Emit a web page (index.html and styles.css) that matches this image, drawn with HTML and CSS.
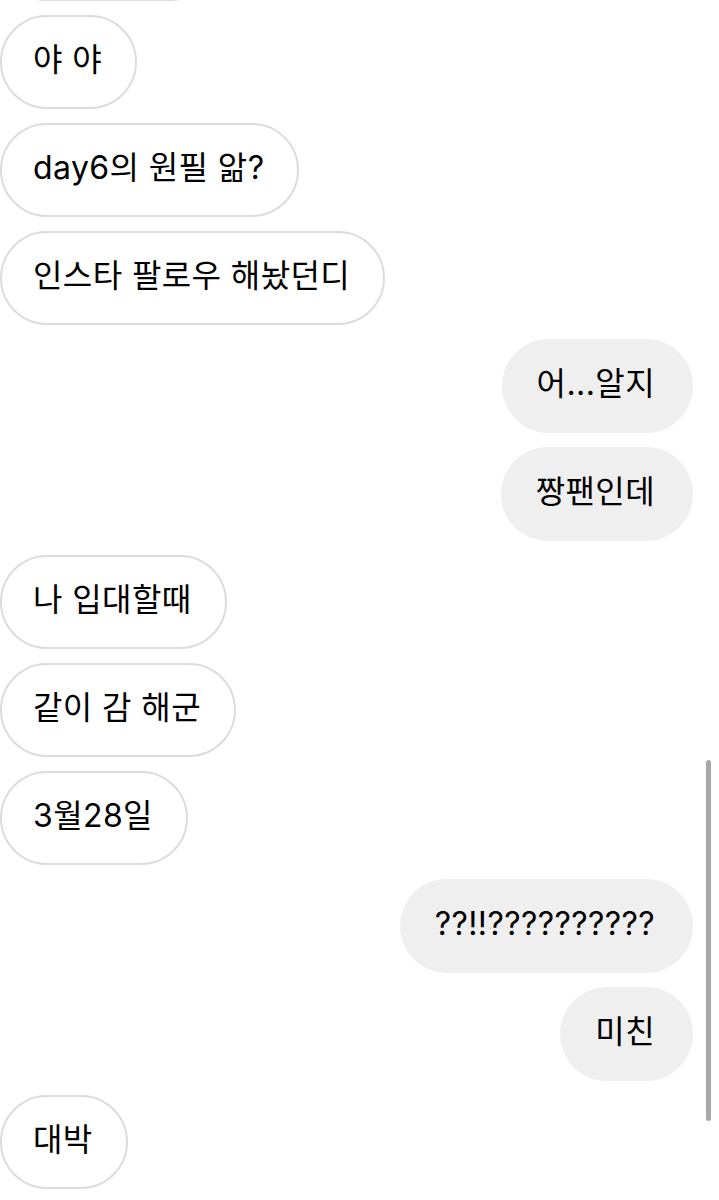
FILE: index.html
```html
<!DOCTYPE html>
<html lang="ko">
<head>
<meta charset="utf-8">
<title>Chat</title>
<link rel="stylesheet" href="styles.css">
</head>
<body>
<div class="thread">
  <div class="msg in">근데있잖아</div>
  <div class="msg in">야 야</div>
  <div class="msg in">day6의 원필 앎?</div>
  <div class="msg in">인스타 팔로우 해놨던디</div>
  <div class="msg out">어...알지</div>
  <div class="msg out">짱팬인데</div>
  <div class="msg in">나 입대할때</div>
  <div class="msg in">같이 감 해군</div>
  <div class="msg in">3월28일</div>
  <div class="msg out">??!!??????????</div>
  <div class="msg out">미친</div>
  <div class="msg in">대박</div>
</div>
<div class="scrollbar"></div>
</body>
</html>
```

FILE: styles.css
```css
html, body {
  margin: 0;
  padding: 0;
  background: #ffffff;
  overflow: hidden;
}

body {
  font-family: "Inter", "Noto Sans CJK KR", "Noto Sans", sans-serif;
  color: #000000;
}

.thread {
  display: flex;
  flex-direction: column;
  gap: 14px;
  margin-top: -93px;
  padding: 0 26px 0 0;
}

.msg {
  box-sizing: border-box;
  height: 94px;
  display: flex;
  align-items: center;
  font-size: 32px;
  line-height: 38px;
  letter-spacing: 0.4px;
  padding-bottom: 4px;
  border-radius: 47px;
  white-space: nowrap;
}

.msg.in {
  align-self: flex-start;
  border: 2px solid #dcdcdc;
  padding-left: 31px;
  padding-right: 33px;
  background: #ffffff;
}

.msg.out {
  align-self: flex-end;
  background: #efefef;
  padding-left: 35px;
  padding-right: 38px;
}

.scrollbar {
  position: absolute;
  left: 706px;
  top: 760px;
  width: 5px;
  height: 361px;
  border-radius: 3px;
  background: #a8a8a8;
}
```
